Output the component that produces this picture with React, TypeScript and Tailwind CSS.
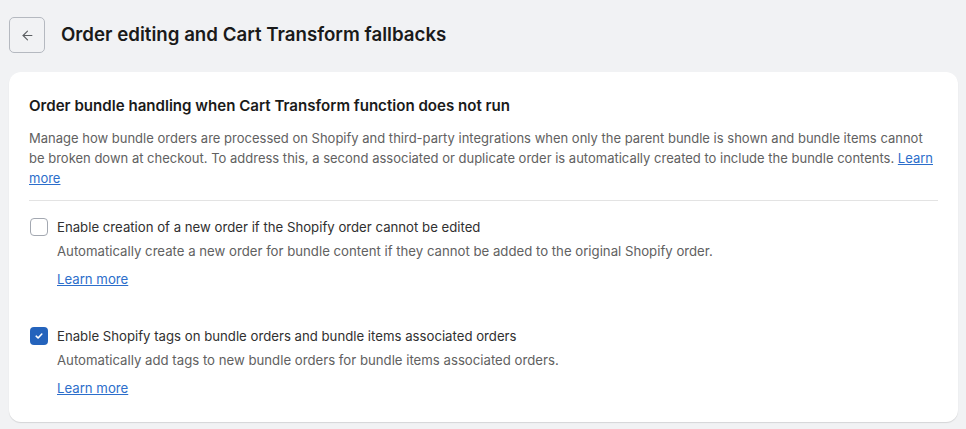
import { ArrowLeft } from 'lucide-react';

function Checkbox({ checked }: { checked: boolean }) {
  return checked ? (
    <span className="mt-[1px] flex h-[18px] w-[18px] shrink-0 items-center justify-center rounded-[4px] bg-[#2463bc]">
      <svg width="10" height="10" viewBox="0 0 10 10" fill="none">
        <path d="M2.2 5.2 4.1 7 7.8 3" stroke="white" strokeWidth="1.6" strokeLinecap="round" strokeLinejoin="round" />
      </svg>
    </span>
  ) : (
    <span className="mt-[1px] h-[18px] w-[18px] shrink-0 rounded-[4px] border-[1.5px] border-[#a3a8b1] bg-white" />
  );
}

function Option({ checked, label, help }: { checked: boolean; label: string; help: string }) {
  return (
    <div className="flex gap-[9px] pl-[1px]">
      <Checkbox checked={checked} />
      <div className="flex flex-col items-start">
        <span className="text-[13.2px] leading-[20px] text-[#303030]">{label}</span>
        <span className="mt-[4px] text-[13.2px] leading-[20px] text-[#616161]">{help}</span>
        <a href="#" className="mt-[8px] text-[13.2px] leading-[20px] text-[#2c6ecb] underline">
          Learn more
        </a>
      </div>
    </div>
  );
}

export default function App() {
  return (
    <div
      className="min-h-[429px] bg-[#f1f2f4] pl-[9px] pr-[8px] pt-[17px] pb-[8px]"
      style={{ fontFamily: 'Inter, "Noto Sans", sans-serif' }}
    >
      <div className="flex items-center gap-[16px]">
        <button className="flex h-[36px] w-[36px] items-center justify-center rounded-[5px] border border-[#b5b9c0] bg-[#f1f2f4] text-[#5c5f62]">
          <ArrowLeft size={15} strokeWidth={1.75} />
        </button>
        <h1 className="text-[18.7px] font-semibold text-[#1a1a1a]">Order editing and Cart Transform fallbacks</h1>
      </div>

      <div className="mt-[19px] rounded-[12px] bg-white px-[20px] pt-[22px] pb-[24px] shadow-[0_1px_1px_rgba(0,0,0,0.12)]">
        <h2 className="text-[15.1px] font-semibold leading-[24px] text-[#1a1a1a]">
          Order bundle handling when Cart Transform function does not run
        </h2>
        <p className="mt-[10px] text-[13px] leading-[20px] text-[#616161]">
          Manage how bundle orders are processed on Shopify and third-party integrations when only the parent bundle is
          shown and bundle items cannot be broken down at checkout. To address this, a second associated or duplicate
          order is automatically created to include the bundle contents.{' '}
          <a href="#" className="text-[#2c6ecb] underline">
            Learn more
          </a>
        </p>
        <div className="mt-[12px] border-t border-[#e3e3e3]" />

        <div className="mt-[16px] flex flex-col gap-[37px]">
          <Option
            checked={false}
            label="Enable creation of a new order if the Shopify order cannot be edited"
            help="Automatically create a new order for bundle content if they cannot be added to the original Shopify order."
          />
          <Option
            checked
            label="Enable Shopify tags on bundle orders and bundle items associated orders"
            help="Automatically add tags to new bundle orders for bundle items associated orders."
          />
        </div>
      </div>
    </div>
  );
}
